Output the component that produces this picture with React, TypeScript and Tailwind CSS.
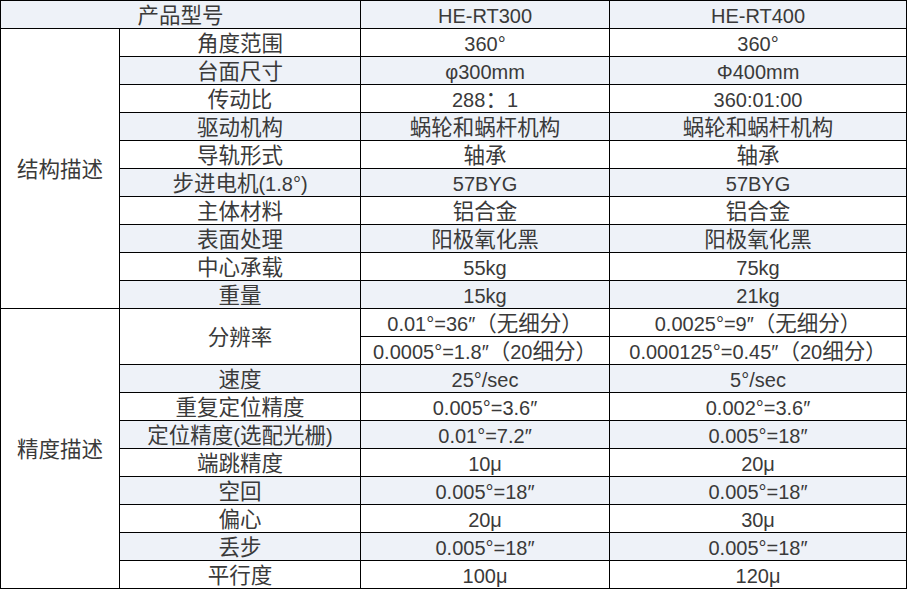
type Row = { label: string; a: string; b: string };

const structRows: Row[] = [
  { label: "角度范围", a: "360°", b: "360°" },
  { label: "台面尺寸", a: "φ300mm", b: "Φ400mm" },
  { label: "传动比", a: "288：1", b: "360:01:00" },
  { label: "驱动机构", a: "蜗轮和蜗杆机构", b: "蜗轮和蜗杆机构" },
  { label: "导轨形式", a: "轴承", b: "轴承" },
  { label: "步进电机(1.8°)", a: "57BYG", b: "57BYG" },
  { label: "主体材料", a: "铝合金", b: "铝合金" },
  { label: "表面处理", a: "阳极氧化黑", b: "阳极氧化黑" },
  { label: "中心承载", a: "55kg", b: "75kg" },
  { label: "重量", a: "15kg", b: "21kg" },
];

const precRows: Row[] = [
  { label: "速度", a: "25°/sec", b: "5°/sec" },
  { label: "重复定位精度", a: "0.005°=3.6″", b: "0.002°=3.6″" },
  { label: "定位精度(选配光栅)", a: "0.01°=7.2″", b: "0.005°=18″" },
  { label: "端跳精度", a: "10μ", b: "20μ" },
  { label: "空回", a: "0.005°=18″", b: "0.005°=18″" },
  { label: "偏心", a: "20μ", b: "30μ" },
  { label: "丢步", a: "0.005°=18″", b: "0.005°=18″" },
  { label: "平行度", a: "100μ", b: "120μ" },
];

// CJK runs are drawn a touch larger, like the source's YaHei rendering
const cjk = /[\u3000-\u9fff\uff00-\uffef]+/g;

function Txt({ s }: { s: string }) {
  const parts: { t: string; c: boolean }[] = [];
  let last = 0;
  for (const m of s.matchAll(cjk)) {
    const i = m.index ?? 0;
    if (i > last) parts.push({ t: s.slice(last, i), c: false });
    parts.push({ t: m[0], c: true });
    last = i + m[0].length;
  }
  if (last < s.length) parts.push({ t: s.slice(last), c: false });
  return (
    <>
      {parts.map((p, i) =>
        p.c ? (
          <span key={i} className="text-[21.5px]">{p.t}</span>
        ) : (
          <span key={i}>{p.t}</span>
        )
      )}
    </>
  );
}

const td = "border border-black h-[28px] p-0 pt-[2px] text-center align-middle whitespace-nowrap";
const shade = "bg-[#eef2f8]";

export default function App() {
  return (
    <div className="bg-white w-[907px] h-[589px]">
      <table
        className="border-collapse table-fixed text-[20px] leading-[24px] text-[#3a3a3a]"
        style={{ width: 906, fontFamily: '"Liberation Sans", "Noto Sans CJK SC", sans-serif' }}
      >
        <colgroup>
          <col style={{ width: 119 }} />
          <col style={{ width: 241 }} />
          <col style={{ width: 249 }} />
          <col style={{ width: 297 }} />
        </colgroup>
        <tbody>
          <tr className={shade}>
            <td colSpan={2} className={td}><Txt s="产品型号" /></td>
            <td className={td}>HE-RT300</td>
            <td className={td}>HE-RT400</td>
          </tr>
          {structRows.map((r, i) => (
            <tr key={r.label} className={i % 2 === 1 ? shade : ""}>
              {i === 0 && (
                <td rowSpan={10} className={`${td} bg-white`}><Txt s="结构描述" /></td>
              )}
              <td className={td}><Txt s={r.label} /></td>
              <td className={td}><Txt s={r.a} /></td>
              <td className={td}><Txt s={r.b} /></td>
            </tr>
          ))}
          <tr>
            <td rowSpan={10} className={`${td} bg-white`}><Txt s="精度描述" /></td>
            <td rowSpan={2} className={td}><Txt s="分辨率" /></td>
            <td className={td}><Txt s="0.01°=36″（无细分）" /></td>
            <td className={td}><Txt s="0.0025°=9″（无细分）" /></td>
          </tr>
          <tr>
            <td className={td}><Txt s="0.0005°=1.8″（20细分）" /></td>
            <td className={td}><Txt s="0.000125°=0.45″（20细分）" /></td>
          </tr>
          {precRows.map((r, i) => (
            <tr key={r.label} className={i % 2 === 0 ? shade : ""}>
              <td className={td}><Txt s={r.label} /></td>
              <td className={td}><Txt s={r.a} /></td>
              <td className={td}><Txt s={r.b} /></td>
            </tr>
          ))}
        </tbody>
      </table>
    </div>
  );
}
